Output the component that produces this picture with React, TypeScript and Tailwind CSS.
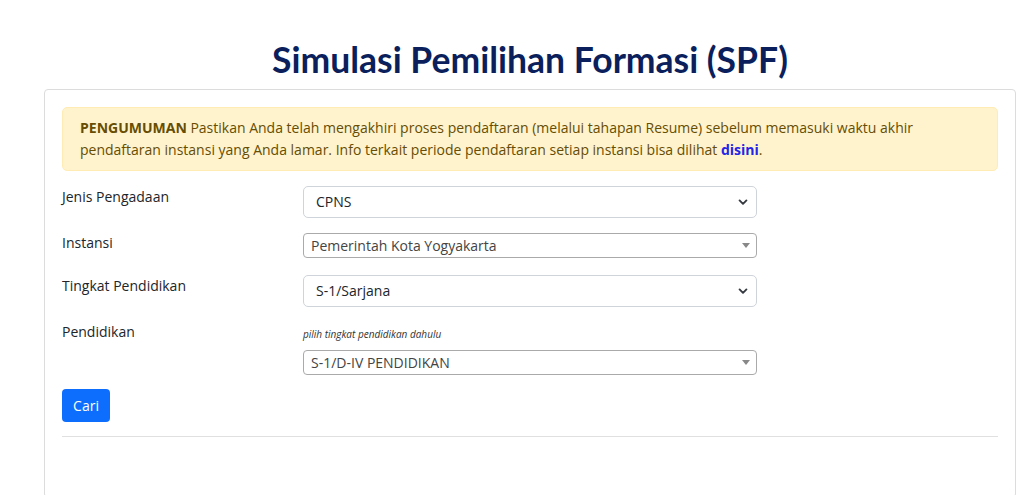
import React from 'react';

function Chevron() {
    return (
        <svg width="10" height="10" viewBox="0 0 16 16" className="shrink-0">
            <path d="M2.5 5.5l5.5 5.5 5.5-5.5" fill="none" stroke="#343a40" strokeWidth="3" strokeLinecap="round" strokeLinejoin="round" />
        </svg>
    );
}

function Caret() {
    return (
        <svg width="8" height="5" viewBox="0 0 8 5" className="shrink-0">
            <path d="M0 0h8L4 5z" fill="#888" />
        </svg>
    );
}

function NativeSelect({ value }: { value: string }) {
    return (
        <div className="h-[32px] w-[454px] flex items-center justify-between pl-[12px] pr-[8px] border border-[#ced4da] rounded-[5px] bg-white text-[14px] text-[#212529]">
            <span>{value}</span>
            <Chevron />
        </div>
    );
}

function Select2({ value }: { value: string }) {
    return (
        <div className="h-[25px] w-[454px] flex items-center justify-between pl-[7px] pr-[6px] border border-[#aaa] rounded-[4px] bg-white text-[14px] text-[#444]">
            <span>{value}</span>
            <Caret />
        </div>
    );
}

export default function App() {
    return (
        <div className="min-h-screen bg-white font-['Open_Sans',sans-serif] text-[#212529]">
            <div className="ml-[44px] w-[972px]">
                <h1 className="pt-[40px] h-[89px] text-center text-[35.5px] leading-[40px] font-bold text-[#0b1f5c] font-['Lato',sans-serif]">
                    Simulasi Pemilihan Formasi (SPF)
                </h1>

                <div className="border border-[#dcdcdc] rounded-[4px] px-[17px] pt-[17px] pb-[60px] bg-white">
                    {/* Announcement */}
                    <div className="bg-[#fff3cd] border border-[#ffecb5] rounded-[5px] px-[17px] py-[9px] text-[14px] leading-[22px] text-[#664d03]">
                        <b>PENGUMUMAN</b> Pastikan Anda telah mengakhiri proses pendaftaran (melalui tahapan Resume) sebelum memasuki waktu akhir pendaftaran instansi yang Anda lamar. Info terkait periode pendaftaran setiap instansi bisa dilihat{' '}
                        <a className="font-bold text-[#2424e8]">disini</a>.
                    </div>

                    <div className="mt-[15px] text-[14px] leading-[20px]">
                        <div className="flex">
                            <label className="w-[241px] mt-[1px]">Jenis Pengadaan</label>
                            <NativeSelect value="CPNS" />
                        </div>

                        <div className="flex mt-[15px]">
                            <label className="w-[241px]">Instansi</label>
                            <Select2 value="Pemerintah Kota Yogyakarta" />
                        </div>

                        <div className="flex mt-[17px]">
                            <label className="w-[241px] mt-[1px]">Tingkat Pendidikan</label>
                            <NativeSelect value="S-1/Sarjana" />
                        </div>

                        <div className="flex mt-[15px]">
                            <label className="w-[241px]">Pendidikan</label>
                            <div>
                                <p className="mt-[5px] mb-[9px] text-[10px] leading-[14px] italic text-[#333]">pilih tingkat pendidikan dahulu</p>
                                <Select2 value="S-1/D-IV PENDIDIKAN" />
                            </div>
                        </div>

                        <button className="mt-[14px] h-[33px] w-[48px] rounded-[4px] bg-[#0d6efd] text-white text-[14px]">
                            Cari
                        </button>
                    </div>

                    <hr className="mt-[14px] border-[#e0e0e0]" />
                </div>
            </div>
        </div>
    );
}
